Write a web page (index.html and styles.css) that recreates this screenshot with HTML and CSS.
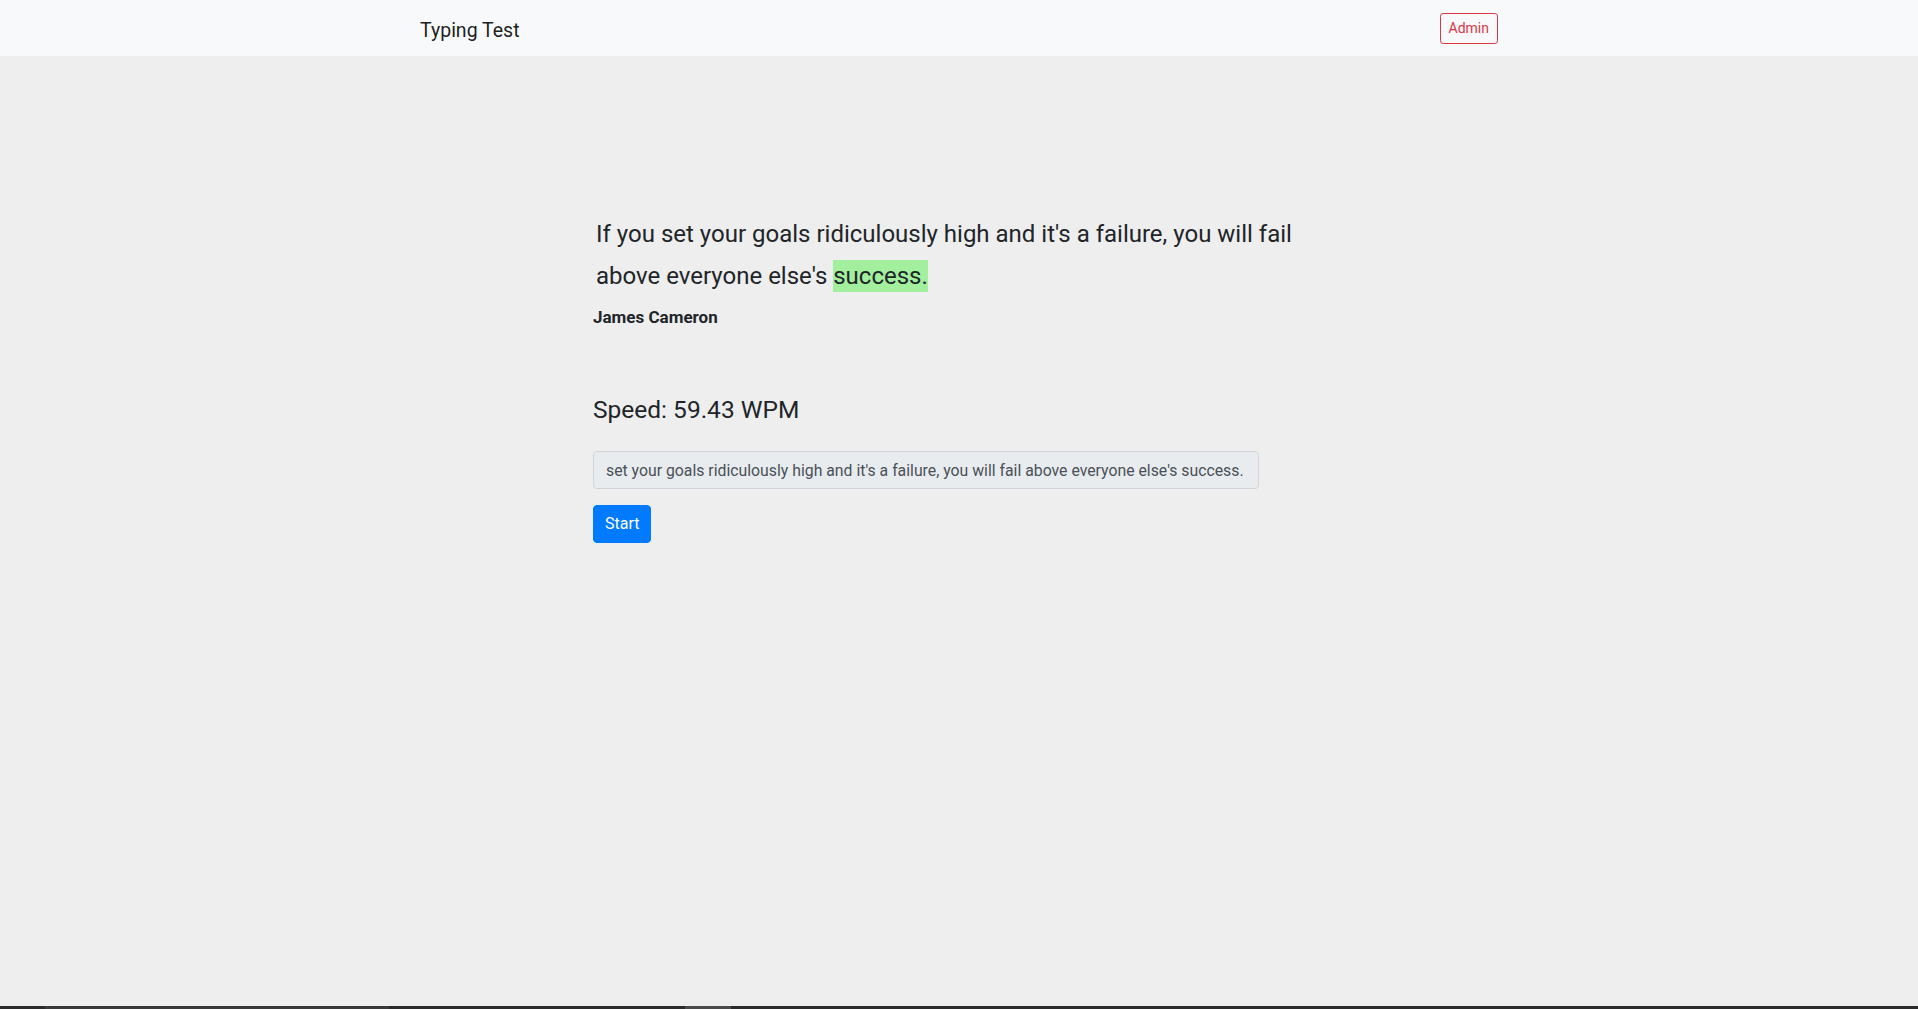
FILE: index.html
```html
<!DOCTYPE html>
<html lang="en">
<head>
<meta charset="utf-8">
<title>Typing Test</title>
<link rel="stylesheet" href="styles.css">
</head>
<body>
<div class="page">
  <header class="topbar">
    <nav class="navbar">
      <a class="brand" href="#">Typing Test</a>
      <button class="btn-admin" type="button">Admin</button>
    </nav>
  </header>
  <main class="main">
    <div class="test-col">
      <p class="quote"><span>If</span> <span>you</span> <span>set</span> <span>your</span> <span>goals</span> <span>ridiculously</span> <span>high</span> <span>and</span> <span>it's</span> <span>a</span> <span>failure,</span> <span>you</span> <span>will</span> <span>fail</span> <span>above</span> <span>everyone</span> <span>else's</span> <span class="current">success.</span></p>
      <p class="author">James Cameron</p>
      <h4 class="speed">Speed: 59.43 WPM</h4>
      <input class="typed" type="text" readonly value="set your goals ridiculously high and it's a failure, you will fail above everyone else's success.">
      <button class="btn-start" type="button">Start</button>
    </div>
  </main>
  <div class="taskbar"><span class="seg seg-a"></span><span class="seg seg-b"></span></div>
</div>
</body>
</html>
```

FILE: styles.css
```css
* {
  box-sizing: border-box;
}

html, body {
  margin: 0;
  padding: 0;
}

body {
  font-family: Roboto, "Open Sans", "Liberation Sans", sans-serif;
  font-size: 16px;
  line-height: 1.5;
  color: #212529;
  background: #eeeeee;
}

.page {
  min-height: 100vh;
  display: flex;
  flex-direction: column;
}

.topbar {
  background: #f8f9fa;
}

.navbar {
  width: 1140px;
  margin: 0 auto;
  padding: 8px 31px;
  display: flex;
  align-items: center;
  justify-content: space-between;
}

.brand {
  font-size: 19.5px;
  line-height: 30px;
  padding: 8px 0 2px;
  color: rgba(0, 0, 0, 0.9);
  text-decoration: none;
}

.btn-admin {
  font-family: inherit;
  font-size: 14px;
  line-height: 21px;
  padding: 4px 8px;
  color: #dc3545;
  background: transparent;
  border: 1px solid #dc3545;
  border-radius: 3.2px;
}

.main {
  flex: 1;
  padding-top: 157px;
}

.test-col {
  width: 732px;
  margin: 0 auto;
  display: flex;
  flex-direction: column;
  align-items: flex-start;
}

.quote {
  margin: 0;
  padding-left: 3px;
  font-size: 24px;
  line-height: 42px;
}

.quote .current {
  background: #a2f09d;
  padding: 2px 0;
}

.author {
  margin: 8px 0 0;
  font-size: 17px;
  font-weight: 700;
  line-height: 24px;
}

.speed {
  margin: 66px 0 0;
  font-size: 24.5px;
  font-weight: 400;
  line-height: 29px;
}

.typed {
  margin-top: 27px;
  width: 666px;
  height: 38px;
  padding: 6px 12px;
  font-family: inherit;
  font-size: 15.8px;
  line-height: 1.5;
  color: #495057;
  background: #e9ecef;
  border: 1px solid #ced4da;
  border-radius: 4px;
  outline: none;
}

.btn-start {
  margin-top: 16px;
  font-family: inherit;
  font-size: 16px;
  line-height: 1.5;
  padding: 6px 11px;
  color: #ffffff;
  background: #007bff;
  border: 1px solid #007bff;
  border-radius: 4px;
}

.taskbar {
  height: 3px;
  background: #2b2b2b;
  display: flex;
}

.seg {
  height: 3px;
  background: #3a3a3a;
}

.seg-a {
  margin-left: 45px;
  width: 344px;
}

.seg-b {
  margin-left: 296px;
  width: 46px;
  background: #4a4a4a;
}
```
